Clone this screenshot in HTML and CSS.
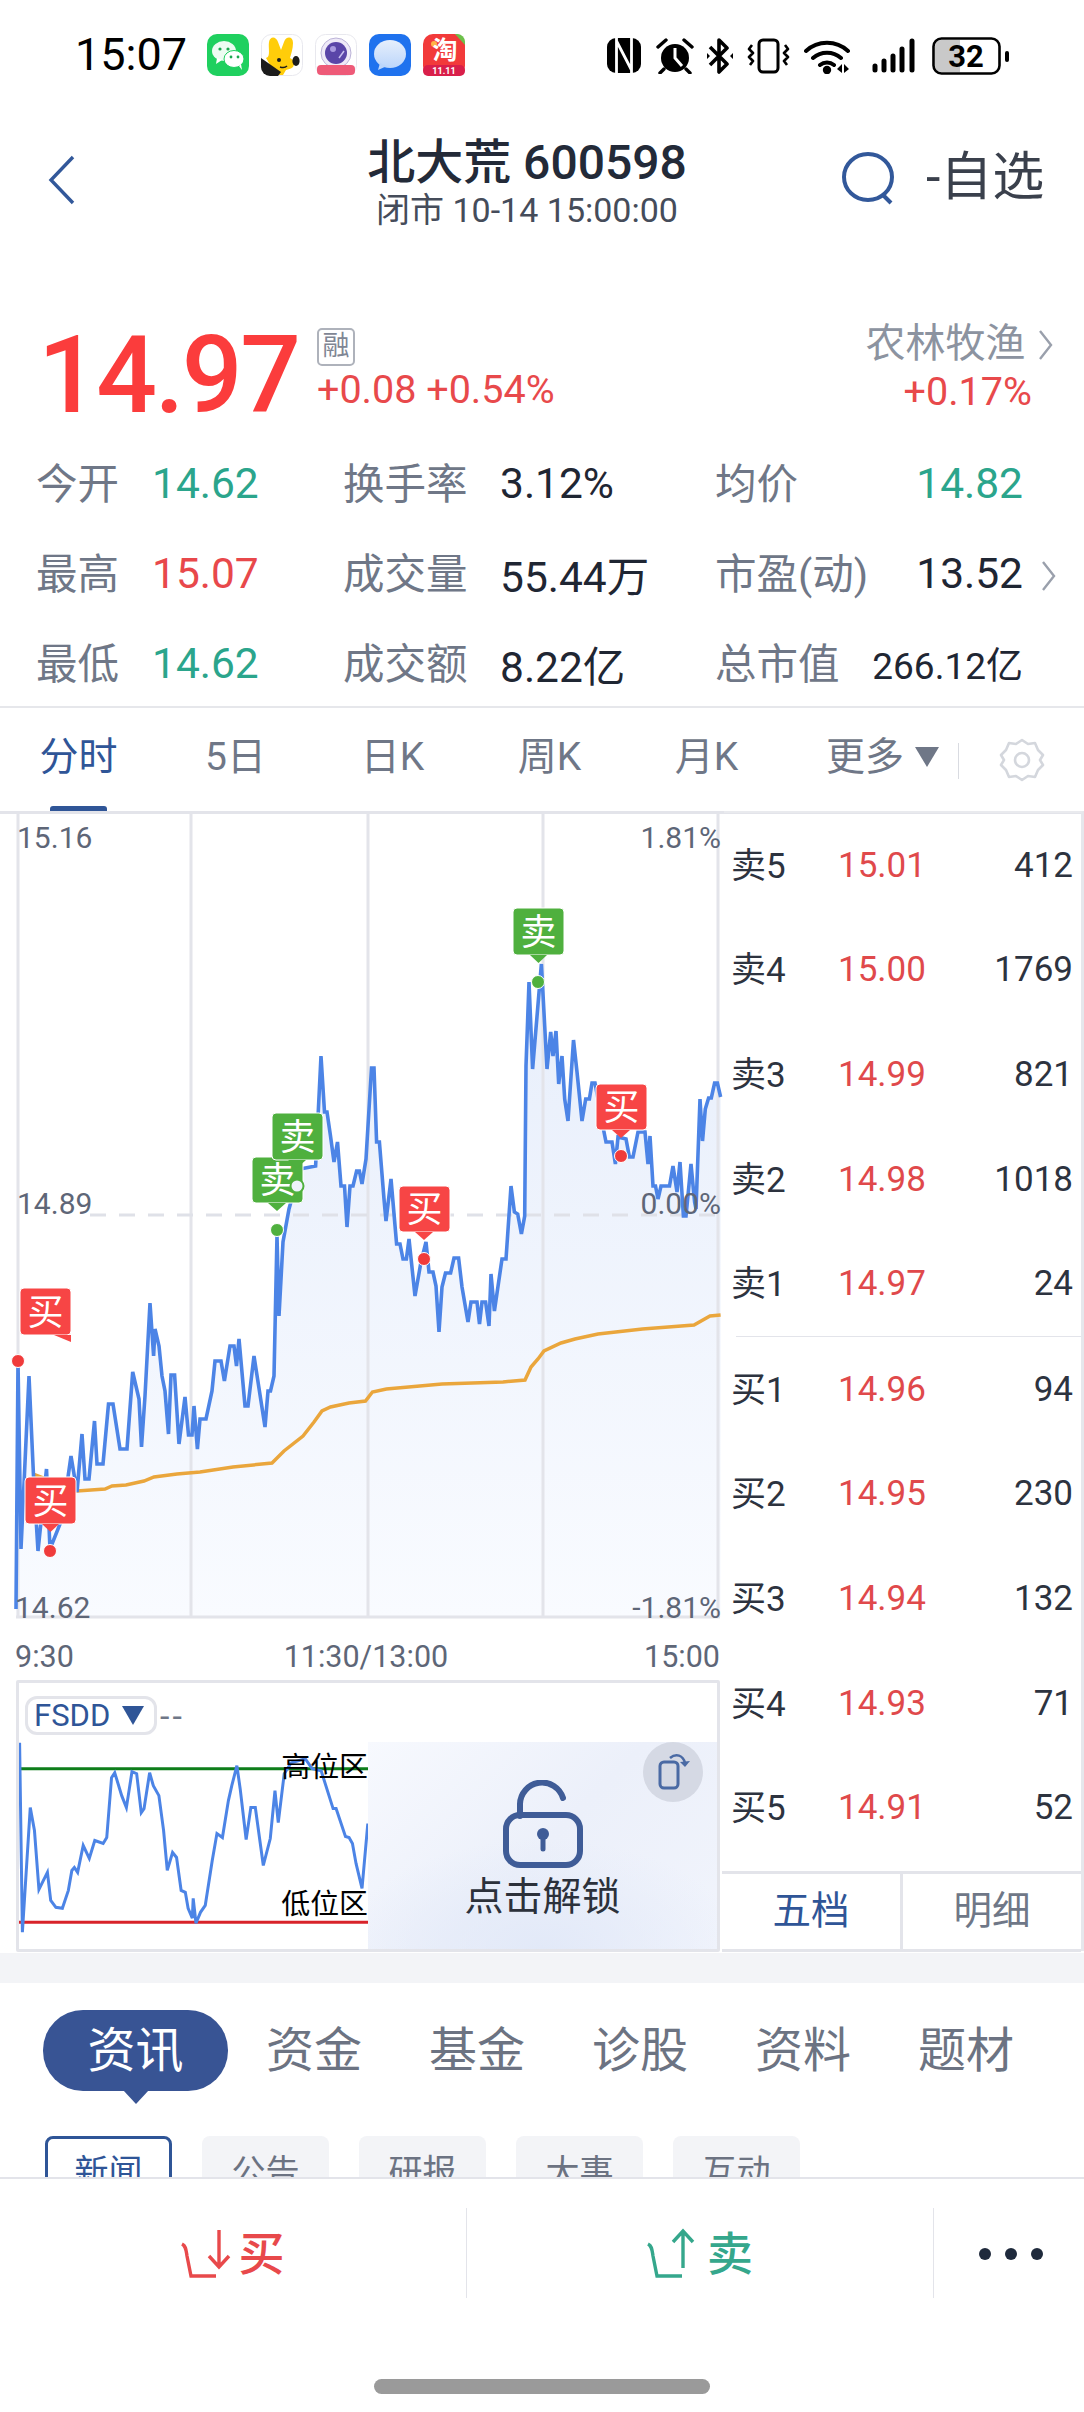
FILE: index.html
```html
<!DOCTYPE html>
<html lang="zh-CN">
<head>
    <meta charset="UTF-8">
    <meta name="viewport" content="width=device-width, initial-scale=1.0">
    <title>北大荒 600598</title>
    <link rel="stylesheet" href="styles.css">
</head>
<body>

    <!-- status bar -->
    <div class="status">
        <span class="clock">15:07</span>
        <div class="apps">
            <svg class="app" viewBox="0 0 42 42"><rect width="42" height="42" rx="10" fill="#1fd05f"/><ellipse cx="17" cy="17" rx="12" ry="10" fill="#fff" opacity=".92"/><path d="M10 24l-1 6 6-4z" fill="#fff"/><ellipse cx="27" cy="25" rx="10" ry="8.5" fill="#fff" stroke="#1fd05f"/><path d="M32 32l3 4-1-6z" fill="#fff"/><circle cx="13" cy="15" r="1.6" fill="#1aa84e"/><circle cx="21" cy="15" r="1.6" fill="#1aa84e"/><circle cx="24" cy="23" r="1.4" fill="#1aa84e"/><circle cx="31" cy="23" r="1.4" fill="#1aa84e"/></svg>
            <svg class="app" viewBox="0 0 42 42"><rect x=".5" y=".5" width="41" height="41" rx="10" fill="#fff" stroke="#e8e8ee"/><path d="M8 8c1-6 7-6 9 0l3 8 3-8c2-6 9-6 9 1 0 6-2 11-3 15 4 2 5 6 3 9-2 2-5 2-7 3l-3 5H15L5 24c5-1 2-10 3-16z" fill="#ffcd0a"/><path d="M0 24l20 14-3 4H9a9 9 0 0 1-9-9z" fill="#1c1c1c"/><ellipse cx="35" cy="27" rx="3.6" ry="5" fill="#1c1c1c"/><circle cx="18" cy="26" r="2" fill="#1c1c1c"/><path d="M19 33c3 1 5 1 7-1" stroke="#1c1c1c" stroke-width="1.4" fill="none"/></svg>
            <svg class="app" viewBox="0 0 42 42"><rect x=".5" y=".5" width="41" height="41" rx="10" fill="#fff" stroke="#e8e8ee"/><circle cx="21" cy="19" r="15" fill="#efeaf8" stroke="#bcb4d8"/><circle cx="21" cy="19" r="11" fill="#5a45a8"/><circle cx="18" cy="15" r="3" fill="#a99ae0"/><path d="M24 24l5-7" stroke="#c9bff0" stroke-width="1.5"/><rect x="2" y="31" width="38" height="10" rx="4" fill="#ee5a78"/></svg>
            <svg class="app" viewBox="0 0 42 42"><defs><linearGradient id="msg" x1="0" y1="0" x2="0" y2="1"><stop offset="0" stop-color="#e6effc"/><stop offset="1" stop-color="#bcd6fb"/></linearGradient></defs><rect width="42" height="42" rx="10" fill="#1f72ee"/><ellipse cx="21" cy="20" rx="16" ry="14" fill="url(#msg)"/><path d="M11 29l-2 7 9-4z" fill="#bcd6fb"/></svg>
            <svg class="app" viewBox="0 0 42 42"><rect width="42" height="42" rx="10" fill="#f23a3a"/><path d="M32 0h2a8 8 0 0 1 8 8v3z" fill="#6cc04a"/><circle cx="11" cy="10" r="3" fill="#ffb347"/><text class="app-glyph" x="22" y="25" text-anchor="middle">淘</text><rect y="31" width="42" height="11" rx="5" fill="#d91f4a"/><text class="app-sale" x="21" y="40" text-anchor="middle">11.11</text></svg>
        </div>
        <div class="sysicons">
            <svg class="sys-nfc" viewBox="0 0 34 35"><rect width="34" height="35" rx="9" fill="#000"/><path d="M9.5 0v35M24.500 0v35M9.500 3l15 29" stroke="#fff" stroke-width="2.8" fill="none"/></svg>
            <svg class="sys-alarm" viewBox="0 0 38 36"><circle cx="19" cy="20" r="14" fill="#000"/><path d="M19 10v10l7 8" stroke="#fff" stroke-width="3" fill="none"/><path d="M2 9l8-7M36 9l-8-7M8 31l-4 4M30 31l4 4" stroke="#000" stroke-width="3.4" stroke-linecap="round"/></svg>
            <svg class="sys-bt" viewBox="0 0 26 36"><path d="M3 9l17 17-8 8V2l8 8L3 27" stroke="#000" stroke-width="3.6" fill="none" stroke-linejoin="round"/><path d="M0 15l3 3-3 3zM26 15l-3 3 3 3z" fill="#000"/></svg>
            <svg class="sys-vib" viewBox="0 0 43 36"><rect x="12" y="2" width="19" height="32" rx="4" stroke="#000" stroke-width="3" fill="none"/><path d="M5 7l-3 4 4 4-4 4 4 4-3 4M38 7l3 4-4 4 4 4-4 4 3 4" stroke="#000" stroke-width="2.6" fill="none" stroke-linejoin="round"/></svg>
            <svg class="sys-wifi" viewBox="0 0 48 36"><path d="M2 13a31 31 0 0 1 42 0M9 20a21 21 0 0 1 28 0M16 27a11 11 0 0 1 14 0" stroke="#000" stroke-width="4" fill="none" stroke-linecap="round"/><circle cx="23" cy="32" r="4.2" fill="#000"/><path d="M38 26v9l-5-4zM40 26v9l5-4z" fill="#000"/></svg>
            <svg class="sys-sig" viewBox="0 0 44 36"><path d="M3 28v4M12 23v9M21 18v14M30 11v21M40 3v29" stroke="#000" stroke-width="5" stroke-linecap="round"/></svg>
            <svg class="sys-batt" viewBox="0 0 78 38"><rect x="3" y="3" width="24" height="32" rx="6" fill="#c9c9c9"/><rect x="15" y="3" width="13" height="32" fill="#c9c9c9"/><rect x="1.5" y="1.5" width="66" height="35" rx="8" stroke="#000" stroke-width="2.6" fill="none"/><rect x="73" y="14" width="4" height="11" rx="2" fill="#000"/><text class="batt-num" x="34" y="30" text-anchor="middle">32</text></svg>
        </div>
    </div>

    <!-- title -->
    <div class="nav">
        <svg class="back" viewBox="0 0 27 50"><path d="M25 2L3 25l22 23" stroke="#32589a" stroke-width="3.4" fill="none"/></svg>
        <div class="nav-title">
            <div class="stock-name">北大荒 600598</div>
            <div class="stock-time">闭市 10-14 15:00:00</div>
        </div>
        <svg class="search" viewBox="0 0 54 54"><ellipse cx="26" cy="25" rx="24" ry="23" stroke="#32589a" stroke-width="4" fill="none"/><path d="M41 43l8 8" stroke="#32589a" stroke-width="4"/></svg>
        <span class="fav">-自选</span>
    </div>

    <!-- price -->
    <div class="quote">
        <div class="price">14.97</div>
        <div class="change">
            <span class="badge">融</span>
            <div class="red">+0.08 +0.54%</div>
        </div>
        <div class="sector">
            <div class="sector-name">农林牧渔 <svg class="chev" viewBox="0 0 15 32"><path d="M2 2l11 14L2 30" stroke="#9aa0ac" stroke-width="2.4" fill="none"/></svg></div>
            <div class="red sector-pct">+0.17%</div>
        </div>
    </div>

    <div class="stats">
        <div class="cell c1"><span class="lbl">今开</span><span class="val green">14.62</span></div>
        <div class="cell c2"><span class="lbl">换手率</span><span class="val">3.12%</span></div>
        <div class="cell c3"><span class="lbl">均价</span><span class="val green">14.82</span></div>

        <div class="cell c1"><span class="lbl">最高</span><span class="val redv">15.07</span></div>
        <div class="cell c2"><span class="lbl">成交量</span><span class="val">55.44万</span></div>
        <div class="cell c3"><span class="lbl">市盈(动)</span><span class="val">13.52<svg class="chev-row" viewBox="0 0 15 32"><path d="M2 2l11 14L2 30" stroke="#9aa0ac" stroke-width="2.4" fill="none"/></svg></span></div>

        <div class="cell c1"><span class="lbl">最低</span><span class="val green">14.62</span></div>
        <div class="cell c2"><span class="lbl">成交额</span><span class="val">8.22亿</span></div>
        <div class="cell c3"><span class="lbl">总市值</span><span class="val small">266.12亿</span></div>
    </div>

    <!-- period tabs -->
    <div class="periods">
        <div class="period active">分时</div>
        <div class="period">5日</div>
        <div class="period">日K</div>
        <div class="period">周K</div>
        <div class="period">月K</div>
        <div class="period more">更多<span class="tri"></span></div>
        <div class="tab-split"></div>
        <svg class="gear" viewBox="0 0 46 46"><path d="M23 3l6 4 7-1 3 7 5 5-3 5 3 5-5 5-3 7-7-1-6 4-6-4-7 1-3-7-5-5 3-5-3-5 5-5 3-7 7 1z" stroke="#d4d7dd" stroke-width="2.6" fill="none" stroke-linejoin="round"/><circle cx="23" cy="23" r="7" stroke="#d4d7dd" stroke-width="2.6" fill="none"/></svg>
    </div>

    <div class="market">
        <div class="left">
            <svg class="chart" viewBox="0 813 724 807">
                <defs>
                    <linearGradient id="area" x1="0" y1="960" x2="0" y2="1618" gradientUnits="userSpaceOnUse">
                        <stop offset="0" stop-color="#e7eefb"/>
                        <stop offset="1" stop-color="#f9fbff"/>
                    </linearGradient>
                </defs>
                <polygon fill="url(#area)" points="16,1618 16,1610 18,1363 21,1550 29,1377 33.5,1477 38,1552 46.5,1470 50,1550 62,1520 71,1457 77,1493 82,1435 85,1480 89,1480 94.5,1422 97,1465 103,1465 108.5,1405 113,1405 120,1450 127,1450 132.7,1373 139,1400 141.5,1448 145,1397 150,1304 153.6,1357 155,1330 159,1347 162,1377 165,1392 168.5,1435 171,1376 174.6,1376 179,1445 185,1398 188.5,1436 192,1436 194,1407 197.4,1450 200,1420 206,1420 212,1392 215,1362 221,1362 224.4,1382 230,1347 234,1347 236.5,1367 239,1340 245,1407 248,1407 254,1357 265,1428 268,1392 270.5,1392 274,1377 277,1237 279,1317 283,1243 289,1210 300,1170 315.6,1167 321,1057 324.5,1113 327,1113 330.5,1137 334,1163 337.5,1143 341,1187 344.5,1187 347,1228 350,1187 353,1187 356.6,1172 359.4,1172 362,1185 366,1160 371.5,1069 374,1069 376.6,1143 379.4,1143 384,1200 386,1222 391,1180 396.6,1245 400,1245 403,1260 406.4,1260 409,1240 415,1297 421,1263 426,1243 429,1273 433,1273 436,1287 439,1333 442,1288 445.5,1274 450.6,1274 454,1259 458.6,1259 462,1288 468,1323 471,1303 477,1303 479.5,1325 482,1303 485.6,1303 489,1327 491,1275 494.4,1312 502,1260 506,1260 511,1187 514.4,1213 517.7,1215 521.4,1235 524.7,1217 526,1067 529,983 532.6,1070 541.4,965 544.7,1027 547,1070 550.7,1033 553,1057 556,1032 558.7,1085 562,1057 564.7,1100 568,1122 573.5,1041 577,1073 582,1122 585.7,1100 589.4,1100 592,1084 595,1084 604,1133 606,1143 612,1143 615.4,1165 618,1138 626,1140 629.4,1158 633,1158 638,1133 645,1133 648,1165 650,1137 653,1187 655.5,1187 658,1200 661,1187 669.5,1187 673,1167 677,1193 680,1163 683.4,1217 686,1217 691,1165 694.6,1203 696,1210 700,1100 702.5,1142 705.3,1110 708.6,1099 711.3,1099 714.6,1084 717.4,1084 720.6,1098 720.6,1618"/>
                <path class="grid" d="M18 813V1618M191 813V1618M368 813V1618M543 813V1618M718 813V1618M16 1618H720"/>
                <path class="midline" d="M90 1216H718"/>
                <polyline class="avg" points="32.6,1475 77,1492 105,1490 112,1487 126,1486 144,1482 154,1478 177,1475 200,1473 233,1468 272,1464 284,1452 303,1437 314,1423 322,1412 330.5,1408 349,1404 365.5,1402 372.4,1393 386.4,1390 442,1385 503,1383 525,1381 531,1368 538,1360 544,1352 561,1344 575,1340 598,1335 642.5,1330 694,1326 710,1317 720.6,1316"/>
                <polyline class="price-line" points="16,1610 18,1363 21,1550 29,1377 33.5,1477 38,1552 46.5,1470 50,1550 62,1520 71,1457 77,1493 82,1435 85,1480 89,1480 94.5,1422 97,1465 103,1465 108.5,1405 113,1405 120,1450 127,1450 132.7,1373 139,1400 141.5,1448 145,1397 150,1304 153.6,1357 155,1330 159,1347 162,1377 165,1392 168.5,1435 171,1376 174.6,1376 179,1445 185,1398 188.5,1436 192,1436 194,1407 197.4,1450 200,1420 206,1420 212,1392 215,1362 221,1362 224.4,1382 230,1347 234,1347 236.5,1367 239,1340 245,1407 248,1407 254,1357 265,1428 268,1392 270.5,1392 274,1377 277,1237 279,1317 283,1243 289,1210 300,1170 315.6,1167 321,1057 324.5,1113 327,1113 330.5,1137 334,1163 337.5,1143 341,1187 344.5,1187 347,1228 350,1187 353,1187 356.6,1172 359.4,1172 362,1185 366,1160 371.5,1069 374,1069 376.6,1143 379.4,1143 384,1200 386,1222 391,1180 396.6,1245 400,1245 403,1260 406.4,1260 409,1240 415,1297 421,1263 426,1243 429,1273 433,1273 436,1287 439,1333 442,1288 445.5,1274 450.6,1274 454,1259 458.6,1259 462,1288 468,1323 471,1303 477,1303 479.5,1325 482,1303 485.6,1303 489,1327 491,1275 494.4,1312 502,1260 506,1260 511,1187 514.4,1213 517.7,1215 521.4,1235 524.7,1217 526,1067 529,983 532.6,1070 541.4,965 544.7,1027 547,1070 550.7,1033 553,1057 556,1032 558.7,1085 562,1057 564.7,1100 568,1122 573.5,1041 577,1073 582,1122 585.7,1100 589.4,1100 592,1084 595,1084 604,1133 606,1143 612,1143 615.4,1165 618,1138 626,1140 629.4,1158 633,1158 638,1133 645,1133 648,1165 650,1137 653,1187 655.5,1187 658,1200 661,1187 669.5,1187 673,1167 677,1193 680,1163 683.4,1217 686,1217 691,1165 694.6,1203 696,1210 700,1100 702.5,1142 705.3,1110 708.6,1099 711.3,1099 714.6,1084 717.4,1084 720.6,1098"/>

                <!-- axis labels -->
                <text class="axis" x="17" y="849">15.16</text>
                <text class="axis" x="721" y="849" text-anchor="end">1.81%</text>
                <text class="axis" x="17" y="1215">14.89</text>
                <text class="axis" x="721" y="1215" text-anchor="end">0.00%</text>
                <text class="axis" x="15" y="1619">14.62</text>
                <text class="axis" x="721" y="1619" text-anchor="end">-1.81%</text>

                <!-- trade points -->
                <g class="pin sell"><rect x="252" y="1158" width="51" height="46" rx="4"/><polygon points="268,1204 286,1204 277,1212"/><text x="277.5" y="1194" text-anchor="middle">卖</text></g>
                <circle class="dot sell-dot" cx="277" cy="1231" r="6.500"/>
                <g class="pin sell"><rect x="272" y="1114" width="51" height="47" rx="4"/><polygon points="288,1161 306,1161 297,1169"/><text x="297.5" y="1151" text-anchor="middle">卖</text></g>
                <circle class="dot ring" cx="297" cy="1187" r="6.500"/>
                <g class="pin sell"><rect x="513" y="909" width="51" height="47" rx="4"/><polygon points="530,956 547,956 538.5,964"/><text x="538.5" y="946" text-anchor="middle">卖</text></g>
                <circle class="dot sell-dot" cx="538" cy="983" r="6.500"/>
                <g class="pin buy"><rect x="399" y="1187" width="51" height="46" rx="4"/><polygon points="415,1233 433,1233 424,1241"/><text x="424.5" y="1223" text-anchor="middle">买</text></g>
                <circle class="dot buy-dot" cx="424" cy="1260" r="6.500"/>
                <g class="pin buy"><rect x="596" y="1085" width="51" height="46" rx="4"/><polygon points="612,1131 630,1131 621,1139"/><text x="621.5" y="1121" text-anchor="middle">买</text></g>
                <circle class="dot buy-dot" cx="621" cy="1157" r="6.500"/>
                <g class="pin buy"><rect x="20" y="1289" width="51" height="47" rx="4"/><polygon points="54,1336 71,1336 71,1343"/><text x="45.5" y="1326" text-anchor="middle">买</text></g>
                <circle class="dot buy-dot" cx="18" cy="1362" r="6.500"/>
                <g class="pin buy"><rect x="25" y="1478" width="51" height="47" rx="4"/><polygon points="42,1525 59,1525 50.5,1533"/><text x="50.5" y="1515" text-anchor="middle">买</text></g>
                <circle class="dot buy-dot" cx="50" cy="1552" r="6.500"/>
            </svg>

            <div class="times"><span>9:30</span><span class="time-mid">11:30/13:00</span><span>15:00</span></div>

            <div class="sub">
                <div class="sub-head">
                    <div class="pill">FSDD<span class="tri tri-blue"></span></div>
                    <span class="dashes">--</span>
                </div>
                <div class="sub-body">
                    <svg class="sub-chart" viewBox="18 1742 350 206">
                        <path class="hi" d="M18 1768H368"/>
                        <path class="lo" d="M18 1922H368"/>
                        <polyline class="sub-line" points="18.6,1742 21.4,1932 29.3,1807 33.5,1830 38,1889 46.5,1872 49.8,1900 55,1907 61.5,1908 67.5,1890 71,1870 73.5,1867 76.8,1872 82.4,1845 88.5,1858 94,1840 102.4,1843 106,1837 110.8,1777 114,1772 121,1795 125.7,1807 131.3,1771 136,1773 140.6,1812 143.4,1808 149,1772 152.7,1785 158.3,1795 163,1830 166.7,1870 172,1852 176,1857 180.6,1890 184.8,1892 187.6,1908 191.8,1918 192.7,1898 195.5,1923 200,1912 204.8,1905 211.8,1860 216.5,1833 222,1837 228,1800 231.4,1785 236.5,1765 239.8,1788 245.8,1839 250.5,1807 255,1807 263,1865 270,1838 274.7,1790 278,1822 284,1773 291,1762 305,1758 312,1768 321,1770 333,1808 336,1808 345.4,1836 349,1837 352.4,1843 356,1863 362,1888 367.8,1823"/>
                        <text class="zone" x="368" y="1776" text-anchor="end">高位区</text>
                        <text class="zone" x="368" y="1914" text-anchor="end">低位区</text>
                    </svg>
                    <div class="locked">
                        <svg class="rotate" viewBox="0 0 60 60"><ellipse cx="30" cy="30" rx="30" ry="30" fill="#d5d9e4"/><rect x="17" y="20" width="18" height="26" rx="4" stroke="#4a6aa4" stroke-width="3" fill="none"/><path d="M27 16c6-5 13-3 15 5" stroke="#4a6aa4" stroke-width="2.6" fill="none"/><path d="M37 20l5 5 5-6z" fill="#4a6aa4"/></svg>
                        <svg class="lock" viewBox="0 0 80 88"><path d="M17 36V24a22 22 0 0 1 43-6" stroke="#3f5c97" stroke-width="6" fill="none" stroke-linecap="round"/><rect x="3" y="35" width="74" height="50" rx="14" stroke="#3f5c97" stroke-width="6" fill="none"/><circle cx="40" cy="54" r="6" fill="#3f5c97"/><path d="M40 54v15" stroke="#3f5c97" stroke-width="5" stroke-linecap="round"/></svg>
                        <div class="unlock-text">点击解锁</div>
                    </div>
                </div>
            </div>
        </div>

        <!-- order book -->
        <div class="depth">
            <div class="row"><span class="dl">卖5</span><span class="dp">15.01</span><span class="dq">412</span></div>
            <div class="row"><span class="dl">卖4</span><span class="dp">15.00</span><span class="dq">1769</span></div>
            <div class="row"><span class="dl">卖3</span><span class="dp">14.99</span><span class="dq">821</span></div>
            <div class="row"><span class="dl">卖2</span><span class="dp">14.98</span><span class="dq">1018</span></div>
            <div class="row"><span class="dl">卖1</span><span class="dp">14.97</span><span class="dq">24</span></div>
            <div class="book-split"></div>
            <div class="row"><span class="dl">买1</span><span class="dp">14.96</span><span class="dq">94</span></div>
            <div class="row"><span class="dl">买2</span><span class="dp">14.95</span><span class="dq">230</span></div>
            <div class="row"><span class="dl">买3</span><span class="dp">14.94</span><span class="dq">132</span></div>
            <div class="row"><span class="dl">买4</span><span class="dp">14.93</span><span class="dq">71</span></div>
            <div class="row"><span class="dl">买5</span><span class="dp">14.91</span><span class="dq">52</span></div>
            <div class="depth-tabs">
                <div class="dtab on">五档</div>
                <div class="dtab">明细</div>
            </div>
        </div>
    </div>

    <div class="gap"></div>

    <div class="sections">
        <div class="section on">资讯</div>
        <div class="section">资金</div>
        <div class="section">基金</div>
        <div class="section">诊股</div>
        <div class="section">资料</div>
        <div class="section">题材</div>
    </div>

    <div class="subtabs">
        <div class="subtab on">新闻</div>
        <div class="subtab">公告</div>
        <div class="subtab">研报</div>
        <div class="subtab">大事</div>
        <div class="subtab">互动</div>
    </div>

    <!-- bottom actions -->
    <div class="actions">
        <div class="action-row">
            <div class="action buy-act">
                <svg class="act-icon" viewBox="0 0 56 50"><path d="M1 16c4 2 4 6 5 12l4 20h25" stroke="#e8494b" stroke-width="3.400" fill="none"/><path d="M38 2v37M28 28l10 11 10-11" stroke="#e8494b" stroke-width="3.400" fill="none"/></svg>
                <span class="act-word">买</span>
            </div>
            <div class="action sell-act">
                <svg class="act-icon" viewBox="0 0 56 50"><path d="M1 16c4 2 4 6 5 12l4 20h25" stroke="#35a78c" stroke-width="3.400" fill="none"/><path d="M36 40V3M26 14L36 3l10 11" stroke="#35a78c" stroke-width="3.400" fill="none"/></svg>
                <span class="act-word">卖</span>
            </div>
            <div class="action dots"><i></i><i></i><i></i></div>
        </div>
        <div class="home"></div>
    </div>

</body>
</html>
```
FILE: styles.css
```css
* {
    box-sizing: border-box;
}

html, body {
    margin: 0;
    padding: 0;
}

body {
    width: 1084px;
    height: 2412px;
    overflow: hidden;
    background-color: #fff;
    font-family: Roboto, "Noto Sans CJK SC", sans-serif;
    color: #1f2633;
}

/* status bar */
.status {
    height: 108px;
    display: flex;
    align-items: flex-start;
    padding: 30px 0 0 75px;
}

.clock {
    width: 132px;
    font-size: 45px;
    line-height: 50px;
    color: #000;
}

.apps {
    display: flex;
    gap: 12px;
    margin-top: 4px;
}

.app {
    width: 42px;
    height: 42px;
}

.app-glyph {
    font-size: 25px;
    font-weight: 700;
    fill: #fff;
}

.app-sale {
    font-size: 9px;
    font-weight: 700;
    fill: #fff;
}

.sysicons {
    display: flex;
    align-items: center;
    margin: 7px 0 0 142px;
    height: 37px;
}

.sys-nfc { width: 34px; height: 35px; }
.sys-alarm { width: 38px; height: 36px; margin-left: 15px; }
.sys-bt { width: 26px; height: 36px; margin-left: 13px; }
.sys-vib { width: 43px; height: 36px; margin-left: 14px; }
.sys-wifi { width: 48px; height: 36px; margin-left: 14px; }
.sys-sig { width: 44px; height: 36px; margin-left: 20px; }
.sys-batt { width: 78px; height: 38px; margin-left: 16px; }

.batt-num {
    font-size: 31px;
    font-weight: 700;
    fill: #000;
}

/* title */
.nav {
    height: 130px;
    display: flex;
    align-items: flex-start;
    padding-left: 48px;
}

.back {
    width: 27px;
    height: 50px;
    margin-top: 47px;
}

.nav-title {
    width: 322px;
    margin: 28px 0 0 291px;
    text-align: center;
}

.stock-name {
    margin: 0 -4px;
    font-size: 48px;
    line-height: 54px;
    font-weight: 500;
    white-space: nowrap;
    color: #232a38;
}

.stock-time {
    font-size: 34px;
    line-height: 40px;
    white-space: nowrap;
    color: #454c5a;
}

.search {
    width: 54px;
    height: 54px;
    margin: 44px 0 0 154px;
}

.fav {
    margin: 41px 0 0 30px;
    font-size: 52px;
    line-height: 58px;
    color: #3a404c;
}

/* price */
.quote {
    height: 200px;
    display: flex;
    align-items: flex-start;
}

.price {
    margin: 85px 0 0 38px;
    width: 279px;
    font-size: 107px;
    line-height: 106px;
    font-weight: 500;
    color: #fb3c3c;
    letter-spacing: -2.500px;
}

.change {
    margin-top: 90px;
    line-height: 46px;
}

.badge {
    display: block;
    width: 38px;
    height: 38px;
    border: 2px solid #aeb2bb;
    border-radius: 5px;
    font-size: 27px;
    line-height: 32px;
    text-align: center;
    color: #7f8694;
    margin-bottom: 3px;
}

.red {
    color: #e8494b;
    font-size: 39.500px;
    line-height: 42px;
    white-space: nowrap;
}

.sector {
    margin: 81px 0 0 311px;
    width: 200px;
}

.sector-name {
    font-size: 40px;
    line-height: 50px;
    white-space: nowrap;
    color: #8c93a0;
}

.chev {
    width: 15px;
    height: 32px;
    margin-left: 2px;
    vertical-align: -4px;
}

.sector-pct {
    margin: 2px 0 0 38px;
}

/* stats */
.stats {
    height: 270px;
    display: grid;
    grid-template-columns: 307px 372px 1fr;
    grid-auto-rows: 90px;
    padding: 0 28px 0 36px;
    border-bottom: 2px solid #e6e7eb;
}

.cell {
    display: flex;
    align-items: center;
    white-space: nowrap;
}

.lbl {
    font-size: 41.500px;
    padding-bottom: 4px;
    color: #6f7787;
}

.val {
    font-size: 42.500px;
    color: #1f2633;
}

.c1 .lbl { width: 116px; }
.c2 .lbl { width: 157px; }

.c3 {
    justify-content: space-between;
    padding-right: 33px;
}

.val.green { color: #2ba58c; }
.val.redv { color: #e8484b; }
.val.small { font-size: 37px; }

.chev-row {
    width: 15px;
    height: 32px;
    margin: 0 -33px 0 18px;
    vertical-align: -4px;
}

/* period tabs */
.periods {
    height: 106px;
    display: flex;
    align-items: flex-start;
    border-bottom: 3px solid #e3e4ea;
}

.period {
    position: relative;
    width: 157px;
    height: 103px;
    padding-top: 25px;
    font-size: 39px;
    line-height: 48px;
    text-align: center;
    color: #6f7787;
}

.period.active {
    color: #2f5597;
}

.period.active::after {
    content: "";
    position: absolute;
    left: 50px;
    bottom: 0;
    width: 57px;
    height: 5px;
    border-radius: 3px 3px 0 0;
    background-color: #2f5597;
}

.period.more {
    width: 173px;
    padding-left: 41px;
    text-align: left;
    white-space: nowrap;
}

.tri {
    display: inline-block;
    width: 0;
    height: 0;
    margin-left: 11px;
    border-left: 12px solid transparent;
    border-right: 12px solid transparent;
    border-top: 20px solid #6f7787;
    vertical-align: 3px;
}

.tab-split {
    width: 1px;
    height: 36px;
    margin-top: 35px;
    background-color: #d9dbe1;
}

.gear {
    width: 46px;
    height: 46px;
    margin: 29px 0 0 40px;
}

/* minute chart + order book */
.market {
    height: 1139px;
    display: flex;
}

.left {
    width: 724px;
    flex: none;
}

.chart {
    display: block;
    width: 724px;
    height: 807px;
    margin-top: -2px;
    overflow: visible;
}

.grid {
    stroke: #e3e4ea;
    stroke-width: 3;
    fill: none;
}

.midline {
    stroke: #dfe1e8;
    stroke-width: 3;
    stroke-dasharray: 16 13;
    fill: none;
}

.price-line {
    fill: none;
    stroke: #4c84e6;
    stroke-width: 3.600;
    stroke-linejoin: miter;
}

.avg {
    fill: none;
    stroke: #eaa63c;
    stroke-width: 3.500;
}

.axis {
    font-size: 30px;
    fill: #5e6677;
}

.pin text {
    font-size: 36px;
    fill: #fff;
}

.pin rect, .pin polygon {
    stroke: #fff;
    stroke-width: 1;
}

.pin.sell rect, .pin.sell polygon { fill: #4fb03e; }
.pin.buy rect, .pin.buy polygon { fill: #f74545; }

.pin polygon { stroke: none; }

.dot { stroke: #fff; stroke-width: 1; }
.sell-dot { fill: #4fb03e; }
.buy-dot { fill: #f03b3b; }
.ring { fill: #eef3fb; stroke: #4fb03e; stroke-width: 2; }

.times {
    height: 61px;
    display: flex;
    justify-content: space-between;
    align-items: flex-start;
    padding: 19px 4px 0 15px;
    font-size: 30.500px;
    line-height: 38px;
    color: #5e6677;
}

.time-mid {
    margin-left: 14px;
}

.sub {
    width: 704px;
    height: 272px;
    margin-left: 16px;
    border: 3px solid #e3e4ea;
    border-radius: 2px;
}

.sub-head {
    height: 59px;
    display: flex;
    align-items: flex-start;
    padding: 13px 0 0 6px;
}

.pill {
    width: 132px;
    height: 39px;
    border: 3px solid #e3e4ea;
    border-radius: 12px;
    padding-left: 6px;
    font-size: 31px;
    line-height: 33px;
    color: #2f5597;
    white-space: nowrap;
}

.tri-blue {
    margin-left: 12px;
    border-left-width: 11px;
    border-right-width: 11px;
    border-top: 19px solid #2f5597;
    vertical-align: 1px;
}

.dashes {
    margin-left: 3px;
    font-size: 34px;
    line-height: 40px;
    letter-spacing: 3px;
    color: #6f7787;
}

.sub-body {
    height: 207px;
    display: flex;
}

.sub-chart {
    width: 349px;
    height: 207px;
    flex: none;
}

.hi { stroke: #0d7d1a; stroke-width: 3; }
.lo { stroke: #d8232a; stroke-width: 3; }

.sub-line {
    fill: none;
    stroke: #4c84e6;
    stroke-width: 3;
}

.zone {
    font-size: 29px;
    fill: #000;
}

.locked {
    position: relative;
    flex: 1;
    display: flex;
    flex-direction: column;
    align-items: center;
    padding-top: 38px;
    background:
        radial-gradient(ellipse 200px 110px at 50% 100%, #e2e9f8, transparent),
        linear-gradient(135deg, #f7f9fe 0%, #ecf0fa 50%, #f1f4fc 100%);
}

.rotate {
    position: absolute;
    top: 0;
    right: 14px;
    width: 60px;
    height: 60px;
}

.lock {
    width: 80px;
    height: 88px;
}

.unlock-text {
    margin-top: 5px;
    font-size: 39px;
    line-height: 48px;
    color: #2c313b;
}

/* order book */
.depth {
    width: 360px;
    height: 1140px;
    margin-top: -3px;
    border-top: 2px solid #e9eaee;
    border-right: 3px solid #e6e7ec;
}

.row {
    height: 104.600px;
    display: grid;
    grid-template-columns: 107px 1fr auto;
    align-items: center;
    padding: 0 8px 0 7px;
    font-size: 35px;
    color: #2d333f;
}

.dl { padding-bottom: 6px; }

.dp { color: #e0494b; }

.book-split {
    height: 1px;
    margin-left: 12px;
    background-color: #e3e4ea;
}

.depth-tabs {
    display: flex;
    height: 81px;
    margin: 11px 0 0 -2px;
    border-top: 3px solid #e3e4ea;
    border-bottom: 3px solid #e3e4ea;
}

.dtab {
    flex: 1;
    font-size: 38.500px;
    line-height: 74px;
    text-align: center;
    color: #6f7787;
}

.dtab.on {
    color: #2f5597;
    border-right: 3px solid #e3e4ea;
}

.gap {
    height: 30px;
    background-color: #f3f4f7;
}

/* news sections */
.sections {
    height: 153px;
    display: flex;
    align-items: flex-start;
    gap: 67px;
    padding-left: 43px;
    font-size: 48px;
    line-height: 81px;
    color: #6c7382;
}

.section {
    margin-top: 27px;
}

.section.on {
    position: relative;
    width: 185px;
    height: 81px;
    margin-right: -29px;
    border-radius: 40px;
    background-color: #385494;
    color: #fff;
    text-align: center;
}

.section.on::after {
    content: "";
    position: absolute;
    left: 80px;
    top: 80px;
    border-left: 13px solid transparent;
    border-right: 13px solid transparent;
    border-top: 14px solid #385494;
}

.subtabs {
    height: 41px;
    overflow: hidden;
    display: flex;
    gap: 30px;
    padding-left: 45px;
}

.subtab {
    width: 127px;
    height: 72px;
    flex: none;
    border-radius: 8px;
    background-color: #f3f4f7;
    font-size: 34px;
    line-height: 72px;
    text-align: center;
    color: #6c7382;
}

.subtab.on {
    background-color: #fff;
    border: 3px solid #2f5597;
    line-height: 66px;
    color: #2f5597;
}

/* bottom bar */
.actions {
    height: 235px;
    border-top: 2px solid #e3e4ea;
    background-color: #fff;
}

.action-row {
    display: flex;
    height: 90px;
    margin-top: 29px;
}

.action {
    display: flex;
    align-items: center;
    justify-content: center;
    width: 467px;
    font-size: 46px;
    border-right: 1px solid #e3e4ea;
}

.act-icon {
    width: 56px;
    height: 50px;
    margin-right: 2px;
}

.act-word {
    padding-bottom: 6px;
    font-weight: 500;
}

.buy-act { color: #e8494b; }
.buy-act .act-icon { margin-left: -1px; }
.sell-act { color: #35a78c; }
.sell-act .act-icon { margin-right: 4px; }

.dots {
    width: 150px;
    gap: 14px;
    padding: 2px 0 0 4px;
    border-right: none;
}

.dots i {
    width: 12px;
    height: 12px;
    border-radius: 50%;
    background-color: #1f2a3c;
}

.home {
    width: 336px;
    height: 15px;
    margin: 81px 0 0 374px;
    border-radius: 8px;
    background-color: #9a9a9a;
}
```
